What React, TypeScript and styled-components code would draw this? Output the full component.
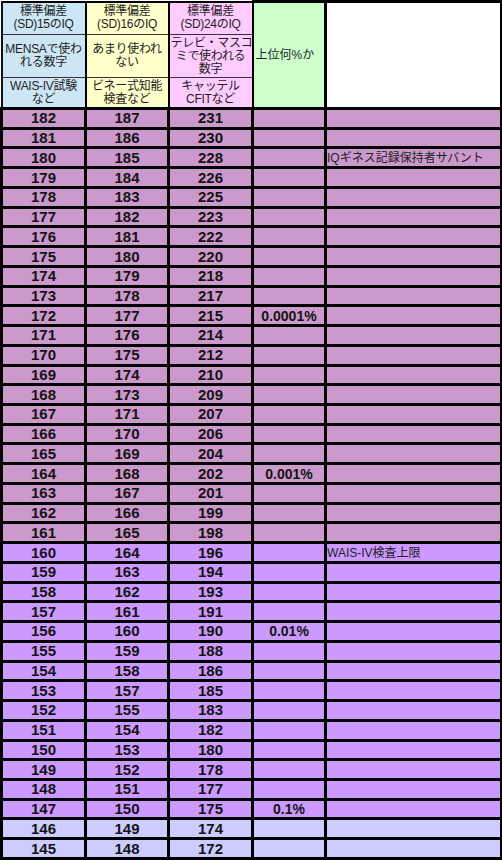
import React from "react";
import styled, { createGlobalStyle } from "styled-components";

const Global = createGlobalStyle`
  html, body { margin: 0; padding: 0; background: #ffffff; }
  body { font-family: "Liberation Sans", Arial, "Noto Sans CJK JP", sans-serif; }
`;

type Band = "plum" | "lavender" | "periwinkle";

const bandColor: Record<Band, string> = {
  plum: "#cc99cc",
  lavender: "#cc99ff",
  periwinkle: "#ccccff",
};

const Table = styled.table`
  border-collapse: collapse;
  table-layout: fixed;
  width: 500px;
  margin: 0;
  font-family: "Liberation Sans", Arial, "Noto Sans CJK JP", sans-serif;
  border: 2px solid #000;
`;

const HeadRow = styled.tr<{ $h: number }>`
  height: ${(p) => p.$h}px;
`;

const HeadCell = styled.td<{ $bg: string }>`
  background: ${(p) => p.$bg};
  color: #1e1e1e;
  font-size: 12px;
  line-height: 13px;
  letter-spacing: -0.3px;
  text-align: center;
  vertical-align: middle;
  white-space: nowrap;
  overflow: hidden;
  padding: 0 1px;
  border-top: 1px solid #333;
  border-bottom: 1px solid #333;
  border-left: 2px solid #111;
  border-right: 2px solid #000;
`;

const SideHead = styled.td<{ $bg: string; $thickLeft?: boolean }>`
  background: ${(p) => p.$bg};
  color: #1e1e1e;
  font-size: 12px;
  line-height: 13px;
  text-align: left;
  vertical-align: middle;
  white-space: nowrap;
  padding: 0 2px;
  border: 3px solid #000;
  border-left: ${(p) => (p.$thickLeft ? "3px" : "2px")} solid #000;
`;

const DataRow = styled.tr`
  height: 19.74px;
`;

const NumCell = styled.td<{ $band: Band }>`
  background: ${(p) => bandColor[p.$band]};
  border: 3px solid #000;
  color: #141414;
  font-weight: bold;
  font-size: 15px;
  line-height: 14px;
  text-align: center;
  vertical-align: middle;
  padding: 0;
`;

const PctCell = styled(NumCell)`
  font-size: 14px;
`;

const NoteCell = styled.td<{ $band: Band }>`
  background: ${(p) => bandColor[p.$band]};
  border: 3px solid #000;
  color: #222;
  font-size: 12px;
  line-height: 13px;
  text-align: left;
  vertical-align: bottom;
  white-space: nowrap;
  padding: 0 0 1px 0;
`;

type Row = { a: number; b: number; c: number; pct?: string; note?: string };

const rows: Row[] = [
  { a: 182, b: 187, c: 231 },
  { a: 181, b: 186, c: 230 },
  { a: 180, b: 185, c: 228, note: "IQギネス記録保持者サバント" },
  { a: 179, b: 184, c: 226 },
  { a: 178, b: 183, c: 225 },
  { a: 177, b: 182, c: 223 },
  { a: 176, b: 181, c: 222 },
  { a: 175, b: 180, c: 220 },
  { a: 174, b: 179, c: 218 },
  { a: 173, b: 178, c: 217 },
  { a: 172, b: 177, c: 215, pct: "0.0001%" },
  { a: 171, b: 176, c: 214 },
  { a: 170, b: 175, c: 212 },
  { a: 169, b: 174, c: 210 },
  { a: 168, b: 173, c: 209 },
  { a: 167, b: 171, c: 207 },
  { a: 166, b: 170, c: 206 },
  { a: 165, b: 169, c: 204 },
  { a: 164, b: 168, c: 202, pct: "0.001%" },
  { a: 163, b: 167, c: 201 },
  { a: 162, b: 166, c: 199 },
  { a: 161, b: 165, c: 198 },
  { a: 160, b: 164, c: 196, note: "WAIS-IV検査上限" },
  { a: 159, b: 163, c: 194 },
  { a: 158, b: 162, c: 193 },
  { a: 157, b: 161, c: 191 },
  { a: 156, b: 160, c: 190, pct: "0.01%" },
  { a: 155, b: 159, c: 188 },
  { a: 154, b: 158, c: 186 },
  { a: 153, b: 157, c: 185 },
  { a: 152, b: 155, c: 183 },
  { a: 151, b: 154, c: 182 },
  { a: 150, b: 153, c: 180 },
  { a: 149, b: 152, c: 178 },
  { a: 148, b: 151, c: 177 },
  { a: 147, b: 150, c: 175, pct: "0.1%" },
  { a: 146, b: 149, c: 174 },
  { a: 145, b: 148, c: 172 },
];

const bandOf = (a: number): Band => (a >= 161 ? "plum" : a >= 147 ? "lavender" : "periwinkle");

const BLUE = "#cde6f5";
const YELLOW = "#ffffcc";
const PINK = "#ffccff";
const GREEN = "#ccffcc";

export default function App() {
  return (
    <>
      <Global />
      <Table>
        <colgroup>
          <col style={{ width: 84 }} />
          <col style={{ width: 83 }} />
          <col style={{ width: 84 }} />
          <col style={{ width: 73 }} />
          <col style={{ width: 176 }} />
        </colgroup>
        <thead>
          <HeadRow $h={33}>
            <HeadCell $bg={BLUE}>
              標準偏差
              <br />
              (SD)15のIQ
            </HeadCell>
            <HeadCell $bg={YELLOW}>
              標準偏差
              <br />
              (SD)16のIQ
            </HeadCell>
            <HeadCell $bg={PINK}>
              標準偏差
              <br />
              (SD)24のIQ
            </HeadCell>
            <SideHead $bg={GREEN} rowSpan={3}>
              上位何%か
            </SideHead>
            <SideHead $bg="#ffffff" $thickLeft rowSpan={3} />
          </HeadRow>
          <HeadRow $h={43}>
            <HeadCell $bg={BLUE}>
              MENSAで使わ
              <br />
              れる数字
            </HeadCell>
            <HeadCell $bg={YELLOW}>
              あまり使われ
              <br />
              ない
            </HeadCell>
            <HeadCell $bg={PINK}>
              テレビ・マスコ
              <br />
              ミで使われる
              <br />
              数字
            </HeadCell>
          </HeadRow>
          <HeadRow $h={31}>
            <HeadCell $bg={BLUE}>
              WAIS-IV試験
              <br />
              など
            </HeadCell>
            <HeadCell $bg={YELLOW}>
              ビネー式知能
              <br />
              検査など
            </HeadCell>
            <HeadCell $bg={PINK}>
              キャッテル
              <br />
              CFITなど
            </HeadCell>
          </HeadRow>
        </thead>
        <tbody>
          {rows.map((r) => {
            const band = bandOf(r.a);
            return (
              <DataRow key={r.a}>
                <NumCell $band={band}>{r.a}</NumCell>
                <NumCell $band={band}>{r.b}</NumCell>
                <NumCell $band={band}>{r.c}</NumCell>
                <PctCell $band={band}>{r.pct || ""}</PctCell>
                <NoteCell $band={band}>{r.note || ""}</NoteCell>
              </DataRow>
            );
          })}
        </tbody>
      </Table>
    </>
  );
}
